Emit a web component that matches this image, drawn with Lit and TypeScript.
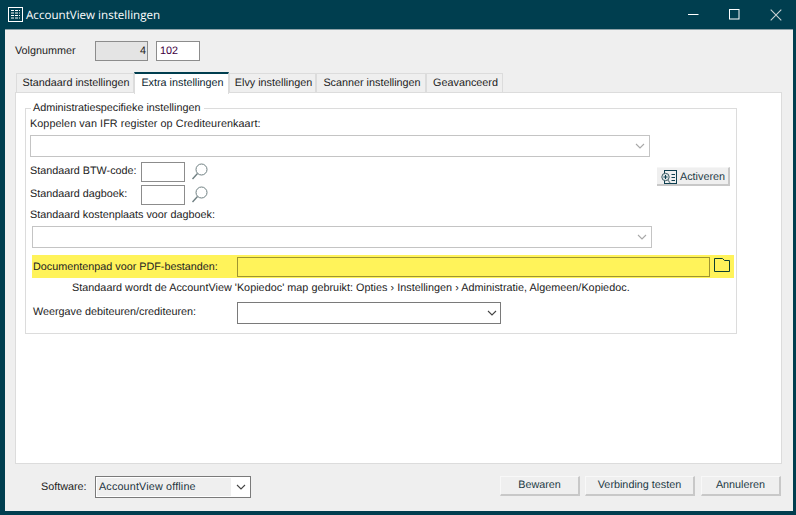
import { LitElement, html, css, svg } from "lit";
import { customElement } from "lit/decorators.js";

const chevron = svg`<svg class="chev" width="10" height="6" viewBox="0 0 10 6"><path d="M1 1 L5 5 L9 1" fill="none" stroke="currentColor" stroke-width="1.1"/></svg>`;
const magnifier = html`<svg class="mag" width="18" height="20" viewBox="0 0 18 20"><circle cx="10.5" cy="7.5" r="5.5" fill="#fff" stroke="#6f7f82" stroke-width="1"/><path d="M6.5 11.5 L1.5 17" fill="none" stroke="#6f7f82" stroke-width="1.4"/></svg>`;

@customElement("app-root")
export class AppRoot extends LitElement {
  static styles = css`
    :host { display: block; width: 796px; height: 515px; background: #003e4f; font: 10.8px "Liberation Sans", Arial, sans-serif; color: #222; overflow: hidden; text-rendering: geometricPrecision; }
    * { box-sizing: border-box; }
    .title { height: 29px; display: flex; align-items: center; padding-left: 8px; color: #fff; }
    .title .name { font: 11.6px "Open Sans", sans-serif; margin-left: 3px; margin-top: 1px; flex: 1; }
    .ctl { display: flex; height: 29px; }
    .ctl span { width: 41px; display: flex; align-items: center; justify-content: center; }
    .win { margin-left: 5px; width: 788px; height: 482px; background: #efefef; padding: 11px 10px 0 10px; display: flex; flex-direction: column; border-top: 1px solid #8fa2a8; }
    .vol { display: flex; align-items: center; height: 20px; }
    .vol label { width: 80px; }
    .num { height: 20px; border: 1px solid #8c8c8c; display: flex; align-items: center; padding: 0 3px; }
    .num.ro { width: 53px; justify-content: flex-end; background: #e4e4e4; margin-right: 8px; padding-right: 1px; }
    .num.rw { width: 44px; background: #fff; color: #400040; }
    .tabs { display: flex; margin-top: 11px; height: 21px; align-items: flex-end; padding-left: 1px; position: relative; z-index: 1; }
    .tab { height: 19px; margin-bottom: 1px; border: 1px solid #dcdcdc; border-bottom: 0; padding: 1px 0 0 2px; text-align: center; background: #efefef; line-height: 16px; }
    .tab.on { height: 22px; margin-bottom: -1px; background: #fff; border: 0; border-top: 2px solid #003e4f; border-left: 1px solid #dcdcdc; border-right: 1px solid #dcdcdc; padding-top: 1px; line-height: 16px; color: #0d2630; }
    .panel { width: 767px; height: 372px; background: #fff; border: 1px solid #dcdcdc; padding: 9px 0 0 9px; margin-top: -1px; }
    fieldset { margin: 0; width: 712px; height: 232px; padding: 0 0 0 4px; border: 1px solid #dcdcdc; display: block; position: relative; }
    legend { margin-left: 1px; padding: 0 4px 0 2px; line-height: 13px; }
    .lbl { line-height: 14px; }
    .l1 { margin-top: 2px; letter-spacing: 0.08px; }
    .combo { height: 22px; width: 620px; border: 1px solid #c4c4c4; background: #fff; display: flex; align-items: center; justify-content: flex-end; padding-right: 4px; color: #a8a8a8; }
    .c1 { margin-top: 4px; }
    .mid { display: flex; margin-top: 5px; height: 43px; }
    .pick { width: 627px; display: flex; flex-direction: column; gap: 3px; }
    .pr { display: flex; align-items: center; height: 20px; }
    .pr label { width: 111px; flex: none; white-space: nowrap; padding-bottom: 2px; }
    .box { width: 44px; height: 20px; border: 1px solid #8c8c8c; background: #fff; margin-right: 6px; }
    .mag { flex: none; }
    .act { margin-top: 5px; width: 73px; height: 19px; background: #efefef; border-right: 2px solid #c8c8c8; border-bottom: 2px solid #c8c8c8; border-top: 1px solid #f6f6f6; display: flex; align-items: center; padding: 1px 0 0 4px; gap: 2px; color: #1d3a45; }
    .l2 { margin-top: 3px; }
    .c2 { margin: 4px 0 0 2px; }
    .yellow { margin: 7px 0 0 2px; width: 702px; height: 23px; background: #fff35a; display: flex; align-items: center; padding-left: 1px; }
    .yellow label { width: 204px; flex: none; }
    .yin { width: 473px; height: 20px; border: 1px solid #9f9530; background: #fff35a; margin-right: 4px; }
    .folder { margin-bottom: 3px; }
    .hint { margin: 3px 0 0 42px; line-height: 14px; letter-spacing: 0.03px; }
    .wg { display: flex; align-items: center; margin: 7px 0 0 3px; }
    .wg label { width: 204px; flex: none; padding-bottom: 3px; }
    .sel { width: 264px; height: 22px; border: 1px solid #7a7a7a; background: #fff; display: flex; align-items: center; justify-content: flex-end; padding-right: 3px; color: #444; }
    .foot { display: flex; align-items: center; margin-top: 12px; height: 22px; padding-left: 26px; }
    .foot label { width: 54px; flex: none; }
    .soft { flex: none; width: 156px; height: 22px; border: 1px solid #7a7a7a; background: #fff; display: flex; align-items: center; padding: 1px; color: #444; margin-right: 249px; }
    .soft .v { width: 134px; height: 18px; background: #efefef; line-height: 18px; padding-left: 2px; color: #1c3440; flex: none; letter-spacing: 0.15px; }
    .soft .chev { margin-left: 5px; }
    .btn { flex: none; width: 80px; height: 20px; align-self: flex-start; background: #efefef; border-top: 1px solid #f8f8f8; border-left: 1px solid #f8f8f8; border-right: 2px solid #c8c8c8; border-bottom: 2px solid #c8c8c8; text-align: center; line-height: 16px; color: #1d3a45; }
    .btn.w { width: 110px; margin: 0 6px 0 5px; }
  `;

  render() {
    return html`
      <div class="title">
        <svg width="15" height="15" viewBox="0 0 15 15"><rect x=".5" y=".5" width="14" height="14" fill="#003e4f" stroke="#fff"/><path d="M3 3.5h9M3 6h9M3 8.5h9M3 11h9" stroke="#fff" stroke-dasharray="3 1"/></svg>
        <span class="name">AccountView instellingen</span>
        <div class="ctl">
          <span><svg width="11" height="3" viewBox="0 0 11 3"><path d="M0 1.5h10.5" stroke="#fff"/></svg></span>
          <span><svg width="11" height="11" viewBox="0 0 11 11"><rect x=".5" y=".5" width="9.5" height="9.5" fill="none" stroke="#fff"/></svg></span>
          <span><svg width="12" height="12" viewBox="0 0 12 12"><path d="M.7.7 11.3 11.3M11.3.7.7 11.3" stroke="#c9d1d3" stroke-width="1.1"/></svg></span>
        </div>
      </div>
      <div class="win">
        <div class="vol"><label>Volgnummer</label><div class="num ro">4</div><div class="num rw">102</div></div>
        <div class="tabs">
          <div class="tab" style="width:118px">Standaard instellingen</div>
          <div class="tab on" style="width:95px">Extra instellingen</div>
          <div class="tab" style="width:87px">Elvy instellingen</div>
          <div class="tab" style="width:110px">Scanner instellingen</div>
          <div class="tab" style="width:77px">Geavanceerd</div>
        </div>
        <div class="panel">
          <fieldset>
            <legend>Administratiespecifieke instellingen</legend>
            <div class="lbl l1">Koppelen van IFR register op Crediteurenkaart:</div>
            <div class="combo c1">${chevron}</div>
            <div class="mid">
              <div class="pick">
                <div class="pr"><label>Standaard BTW-code:</label><div class="box"></div>${magnifier}</div>
                <div class="pr"><label>Standaard dagboek:</label><div class="box"></div>${magnifier}</div>
              </div>
              <div class="act">
                <svg width="17" height="14" viewBox="0 0 17 14"><rect x="3.5" y=".5" width="12" height="13" fill="#efefef" stroke="#0d3f50"/><path d="M10.5 4.5h3.5M10.5 7.5h3.5M10.5 10.5h3.5" stroke="#0d3f50"/><circle cx="4.5" cy="7" r="3.7" fill="#dfe6e8" stroke="#3d5c65"/><path d="M2.5 7h4M4.5 5v4" stroke="#0d3f50"/><path d="M7 10l2 3" stroke="#6f8288" stroke-width="1.3"/></svg>
                Activeren
              </div>
            </div>
            <div class="lbl l2">Standaard kostenplaats voor dagboek:</div>
            <div class="combo c2">${chevron}</div>
            <div class="yellow">
              <label>Documentenpad voor PDF-bestanden:</label>
              <div class="yin"></div>
              <svg class="folder" width="16" height="14" viewBox="0 0 16 14"><path d="M.5 13.5V.5h8l2 2h5v11z" fill="none" stroke="#0d3f30"/></svg>
            </div>
            <div class="hint">Standaard wordt de AccountView 'Kopiedoc' map gebruikt: Opties › Instellingen › Administratie, Algemeen/Kopiedoc.</div>
            <div class="wg"><label>Weergave debiteuren/crediteuren:</label><div class="sel">${chevron}</div></div>
          </fieldset>
        </div>
        <div class="foot">
          <label>Software:</label>
          <div class="soft"><div class="v">AccountView offline</div>${chevron}</div>
          <div class="btn">Bewaren</div>
          <div class="btn w">Verbinding testen</div>
          <div class="btn">Annuleren</div>
        </div>
      </div>
    `;
  }
}
